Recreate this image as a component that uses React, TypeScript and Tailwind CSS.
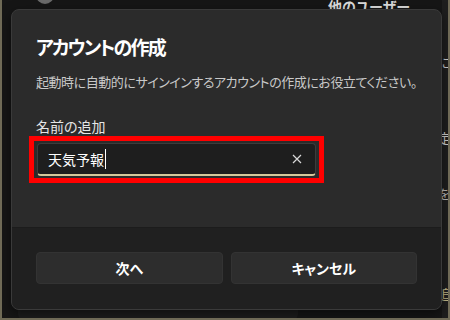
import React from "react";

export default function App() {
  const font = "[font-family:'Noto_Sans_CJK_JP','Noto_Sans',sans-serif]";
  return (
    <div
      className={`relative w-[450px] h-[320px] overflow-hidden bg-[#161616] border-l-2 border-b-2 border-r-2 border-[#6f6a56] ${font} [font-feature-settings:'palt']`}
    >
      {/* background app fragments (partly covered by the dialog) */}
      <div className="absolute left-[34px] top-[-14px] w-[18px] h-[18px] rounded-full bg-[#6a6a6a]" />
      <div className="absolute left-[326px] top-[-4px] text-[14px] font-bold text-[#dcdcdc] leading-[20px]">
        他のユーザー
      </div>
      <div className="absolute right-0 top-0 w-[6px] h-full bg-[#1e1e1e]" />
      <div className="absolute left-[436px] top-[0px] h-full flex flex-col text-[13px] leading-[20px] whitespace-nowrap">
        <span className="mt-[52px] text-[#cfcfcf]">に追</span>
        <span className="mt-[56px] text-[#cfcfcf]">定す</span>
        <span className="mt-[36px] text-[#bdbdbd]">を</span>
        <span className="mt-[80px] text-[#c8bd8c]">追</span>
      </div>
      <div className="absolute left-[16px] top-[300px] w-[280px] h-[20px] rounded-b-md bg-[#1d1d1d]" />

      {/* dialog */}
      <div className="absolute left-[9px] top-[9px] w-[431px] h-[301px] rounded-[8px] border border-[#3a3a3a] bg-[#2b2b2b] overflow-hidden flex flex-col shadow-[0_4px_12px_rgba(0,0,0,0.5)]">
        <div className="flex-1 px-6 pt-[23px]">
          <div className="text-[19px] leading-[28px] font-bold text-white tracking-[-1.8px]">アカウントの作成</div>
          <div className="mt-[11px] text-[13px] leading-[20px] text-[#c9c9c9] whitespace-nowrap tracking-[-0.45px]">
            起動時に自動的にサインインするアカウントの作成にお役立てください。
          </div>
          <div className="mt-[24px] text-[14px] leading-[20px] text-[#e6e6e6]">名前の追加</div>
          <div className="relative mt-[7px] w-[279px] ml-px">
            <div className="flex items-center h-[33px] rounded-[4px] border border-[#3c3c3c] border-b-2 border-b-[#d6c89a] bg-[#1e1e1e] pl-[10px] pr-[12px]">
              <span className="text-[14px] leading-[20px] text-white">天気予報</span>
              <span className="ml-[1px] w-px h-[20px] bg-white" />
              <div className="flex-1" />
              <svg width="10" height="10" viewBox="0 0 10 10" className="mr-[1px]">
                <path d="M1 1 L9 9 M9 1 L1 9" stroke="#d8d8d8" strokeWidth="1.2" fill="none" />
              </svg>
            </div>
            <div className="absolute left-[-8px] top-[-7px] right-[-8px] bottom-[-7px] border-[5px] border-[#ff0000]" />
          </div>
        </div>
        <div className="h-[82px] bg-[#202020] border-t border-[#1c1c1c] px-6 pt-[24px] flex gap-2">
          <button className="w-[187px] h-[32px] rounded-[4px] bg-[#2d2d2d] border border-[#333333] text-[14px] font-bold text-white">
            次へ
          </button>
          <button className="w-[187px] h-[32px] rounded-[4px] bg-[#2d2d2d] border border-[#333333] text-[14px] font-bold text-white">
            キャンセル
          </button>
        </div>
      </div>
    </div>
  );
}
